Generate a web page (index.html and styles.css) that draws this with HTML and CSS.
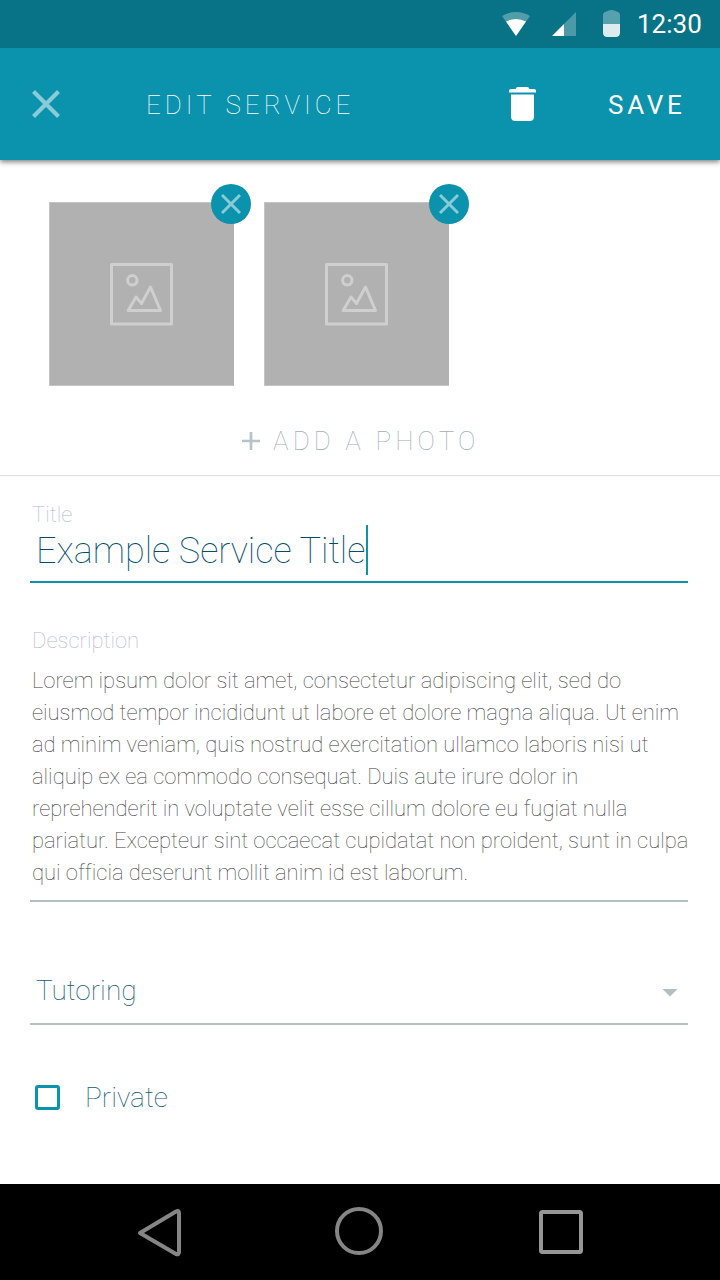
FILE: index.html
```html
<!DOCTYPE html>
<html lang="en">
<head>
<meta charset="utf-8">
<title>Edit Service</title>
<link rel="stylesheet" href="styles.css">
</head>
<body>
<div class="screen">
  <div class="statusbar">
    <svg class="wifi" width="28" height="24" viewBox="0 0 28 24"><path d="M0 4Q14-4 28 4L14 24Z" fill="#fff" fill-opacity=".3"/><path d="M4 9.500Q14 4.500 24 9.500L14 24Z" fill="#fff"/></svg>
    <svg class="signal" width="24" height="24" viewBox="0 0 24 24"><path d="M24 0V24H0Z" fill="#fff" fill-opacity=".28"/><path d="M12 12V24H0Z" fill="#fff"/></svg>
    <svg class="battery" width="17" height="27" viewBox="0 0 17 27"><path d="M0 14V5Q0 2 3.500 1.500Q5 0 8.500 0T13.500 1.500Q17 2 17 5V14Z" fill="#fff" fill-opacity=".32"/><path d="M0 14H17V22.500Q17 27 12.500 27H4.500Q0 27 0 22.500Z" fill="#deeced"/></svg>
    <span class="clock">12:30</span>
  </div>
  <header class="appbar">
    <svg class="close" width="28" height="28" viewBox="0 0 28 28"><path d="M1.500 1.500L26.500 26.500M26.500 1.500L1.500 26.500" stroke="#89cbd8" stroke-width="4.200"/></svg>
    <h1 class="heading">EDIT SERVICE</h1>
    <svg class="trash" width="27" height="34" viewBox="0 0 27 34"><path d="M0 5.500V3.500Q0 2 2 2H6.500Q7 0 9 0H18Q20 0 20.500 2H25Q27 2 27 3.500V5.500ZM2 7.500H25V29.500Q25 34 20.500 34H6.500Q2 34 2 29.500Z" fill="#fff"/></svg>
    <span class="save">SAVE</span>
  </header>
  <main class="content">
    <section class="photos">
      <div class="thumbs">
        <div class="thumb">
          <svg width="64" height="64" viewBox="0 0 64 64" fill="none" stroke="#cfcfcf" stroke-width="3" stroke-linejoin="round"><rect x="1.500" y="1.500" width="60" height="59.500"/><circle cx="22.300" cy="17.300" r="4.700"/><path d="M18.200 47.500L26 34L31.500 40.500L40.500 24L50.500 47.500Z"/></svg>
          <span class="remove"><svg width="20" height="20" viewBox="0 0 20 20"><path d="M1 1L19 19M19 1L1 19" stroke="#89cbd8" stroke-width="2.900"/></svg></span>
        </div>
        <div class="thumb">
          <svg width="64" height="64" viewBox="0 0 64 64" fill="none" stroke="#cfcfcf" stroke-width="3" stroke-linejoin="round"><rect x="1.500" y="1.500" width="60" height="59.500"/><circle cx="22.300" cy="17.300" r="4.700"/><path d="M18.200 47.500L26 34L31.500 40.500L40.500 24L50.500 47.500Z"/></svg>
          <span class="remove second"><svg width="20" height="20" viewBox="0 0 20 20"><path d="M1 1L19 19M19 1L1 19" stroke="#89cbd8" stroke-width="2.900"/></svg></span>
        </div>
      </div>
      <div class="add">
        <svg width="18" height="18" viewBox="0 0 18 18"><path d="M9 0V18M0 9H18" stroke="#b8c2ca" stroke-width="2.700"/></svg>
        <span class="add-text">ADD A PHOTO</span>
      </div>
    </section>
    <section class="form">
      <div class="field title">
        <span class="label">Title</span>
        <div class="title-value"><span class="title-text">Example Service Title</span><span class="caret"></span></div>
      </div>
      <div class="field description">
        <span class="label">Description</span>
        <p class="body">Lorem ipsum dolor sit amet, consectetur adipiscing elit, sed do<br>eiusmod tempor incididunt ut labore et dolore magna aliqua. Ut enim<br>ad minim veniam, quis nostrud exercitation ullamco laboris nisi ut<br>aliquip ex ea commodo consequat. Duis aute irure dolor in<br>reprehenderit in voluptate velit esse cillum dolore eu fugiat nulla<br>pariatur. Excepteur sint occaecat cupidatat non proident, sunt in culpa<br>qui officia deserunt mollit anim id est laborum.</p>
      </div>
      <div class="field category">
        <span class="option">Tutoring</span>
        <svg width="16" height="8" viewBox="0 0 16 8"><path d="M.500 0H15.500L8 7.500Z" fill="#b4bec5"/></svg>
      </div>
      <div class="check-row">
        <span class="checkbox"></span>
        <span class="option private">Private</span>
      </div>
    </section>
  </main>
  <nav class="navbar">
    <svg class="back" width="46" height="52" viewBox="0 0 46 52"><path d="M3 26L39 4.500Q42 3 42 6V45Q42 48 39 47Z" fill="none" stroke="#858585" stroke-width="4" stroke-linejoin="round"/></svg>
    <svg class="home" width="48" height="48" viewBox="0 0 48 48"><circle cx="24" cy="24" r="22" fill="none" stroke="#858585" stroke-width="4"/></svg>
    <svg class="recent" width="44" height="44" viewBox="0 0 44 44"><rect x="2" y="2" width="40" height="40" rx="1.500" fill="none" stroke="#969696" stroke-width="4"/></svg>
  </nav>
</div>
</body>
</html>
```
FILE: styles.css
```css
* { box-sizing: border-box; }
body { margin: 0; font-family: Roboto, sans-serif; font-weight: 100; background: #fff; }
svg { display: block; flex: none; }
.screen { width: 720px; height: 1280px; display: flex; flex-direction: column; overflow: hidden; }
.statusbar { position: relative; z-index: 1; height: 48px; flex: none; display: flex; align-items: flex-start; padding-left: 502px; background: #087386; }
.wifi { margin-top: 12px; }
.signal { margin: 12px 0 0 22px; }
.battery { margin: 10px 0 0 27px; }
.clock { margin-left: 17px; color: #fff; font-size: 26px; font-weight: 400; line-height: 48px; white-space: nowrap; }
.appbar { height: 112px; flex: none; display: flex; align-items: center; padding-left: 32px; background: #0b92ad; box-shadow: 0 2px 5px rgba(0, 0, 0, .5); position: relative; white-space: nowrap; }
.heading { margin: 2px 0 0 86px; width: 361px; color: #fff; font-size: 26px; font-weight: 100; letter-spacing: 4px; line-height: 32px; }
.trash { margin-left: 2px; }
.save { margin: 2px 0 0 72px; color: #fff; font-size: 26px; font-weight: 400; letter-spacing: 3.700px; line-height: 32px; }
.content { flex: 1; }
.photos { height: 316px; padding: 42px 0 0 49px; border-bottom: 1px solid #dedede; }
.thumbs { display: flex; gap: 30px; }
.thumb { position: relative; width: 185px; height: 184px; padding: 60px 0 0 61px; background: #b1b1b1; border: 1px solid #c4c4c4; border-right: 0; }
.thumb svg { margin: 0 0 0 -1px; }
.remove { position: absolute; top: -19px; right: -17px; width: 40px; height: 40px; border-radius: 50%; background: #0b92ad; display: flex; align-items: center; justify-content: center; }
.remove.second { right: -20px; }
.thumb .remove svg { margin: 0; }
.add { display: flex; align-items: center; gap: 13px; margin: 39px 0 0 193px; height: 32px; }
.add-text { color: #a3afb9; font-size: 26px; letter-spacing: 4.150px; white-space: nowrap; }
.form { padding: 0 32px 0 30px; }
.label { display: block; padding-left: 2px; font-size: 22px; line-height: 28px; color: #b0bac2; }
.title { height: 107px; padding-top: 25px; border-bottom: 2px solid #0b92ad; }
.title-value { display: flex; height: 50px; margin-top: -4px; padding-left: 6px; }
.title-text { font-size: 36px; line-height: 52px; color: #004c6d; white-space: nowrap; }
.caret { width: 2px; height: 50px; margin-left: 1px; background: #0b92ad; }
.description { height: 319px; padding-top: 44px; border-bottom: 2px solid #b4bec8; }
.body { margin: 10px 0 0 2px; font-size: 22px; line-height: 32px; letter-spacing: -.015px; font-variant-ligatures: common-ligatures; color: #3c3c3c; white-space: nowrap; }
.category { height: 123px; display: flex; align-items: flex-start; justify-content: space-between; padding: 71px 10px 0 6px; border-bottom: 2px solid #b4bec8; }
.category svg { margin-top: 16px; }
.option { font-size: 28px; line-height: 36px; color: #125a78; white-space: nowrap; }
.private { margin-top: 2px; }
.check-row { display: flex; align-items: center; gap: 25px; margin-top: 53px; padding-left: 5px; }
.checkbox { width: 25px; height: 25px; border: 3px solid #0b92ad; border-radius: 3px; }
.navbar { height: 96px; flex: none; display: flex; align-items: flex-start; padding-left: 137px; background: #000; }
.back { margin-top: 23px; }
.home { margin: 23px 0 0 152px; }
.recent { margin: 26px 0 0 156px; }
```
